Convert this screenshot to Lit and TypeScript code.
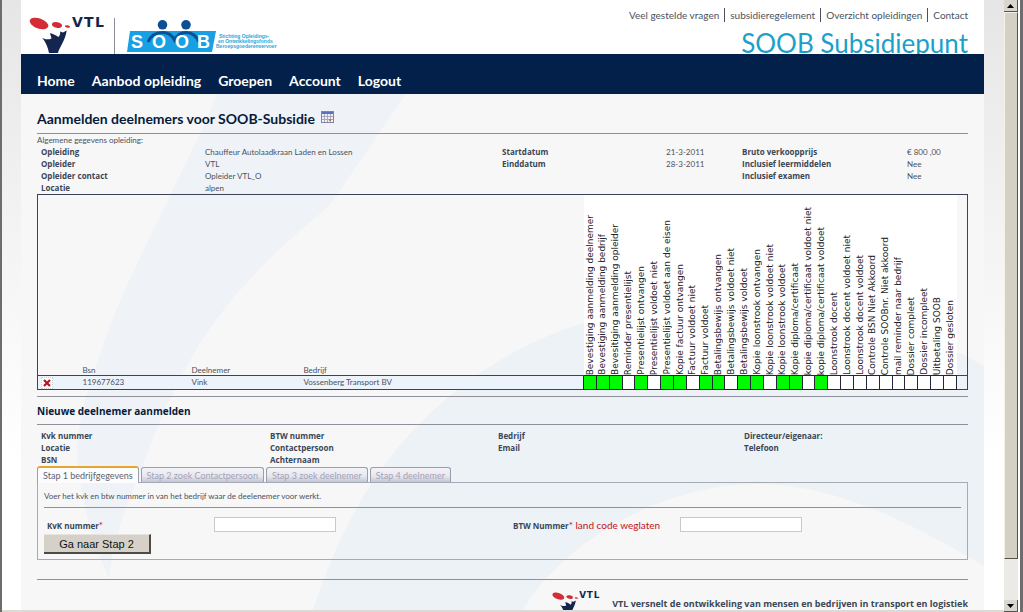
import { LitElement, html, css, svg } from "lit";
import { customElement, property, state } from "lit/decorators.js";
import { classMap } from "lit/directives/class-map.js";

const STEPS: { label: string; done: boolean }[] = [
  { label: "Bevestiging aanmelding deelnemer", done: true },
  { label: "Bevestiging aanmelding bedrijf", done: true },
  { label: "Bevesitiging aanmelding opleider", done: true },
  { label: "Reminder presentielijst", done: false },
  { label: "Presentielijst ontvangen", done: true },
  { label: "Presentielijst voldoet niet", done: false },
  { label: "Presentielijst voldoet aan de eisen", done: true },
  { label: "Kopie factuur ontvangen", done: true },
  { label: "Factuur voldoet niet", done: false },
  { label: "Factuur voldoet", done: true },
  { label: "Betalingsbewijs ontvangen", done: true },
  { label: "Betalingsbewijs voldoet niet", done: false },
  { label: "Betalingsbewijs voldoet", done: true },
  { label: "Kopie loonstrook ontvangen", done: true },
  { label: "Kopie loonstrook voldoet niet", done: false },
  { label: "Kopie loonstrook voldoet", done: true },
  { label: "Kopie diploma/certificaat", done: true },
  { label: "kopie diploma/certificaat voldoet niet", done: false },
  { label: "kopie diploma/certificaat voldoet", done: true },
  { label: "Loonstrook docent", done: false },
  { label: "Loonstrook docent voldoet niet", done: false },
  { label: "Loonstrook docent voldoet", done: false },
  { label: "Controle BSN Niet Akkoord", done: false },
  { label: "Controle SOOBnr. Niet akkoord", done: false },
  { label: "mail reminder naar bedrijf", done: false },
  { label: "Dossier compleet", done: false },
  { label: "Dossier incompleet", done: false },
  { label: "Uitbetaling SOOB", done: false },
  { label: "Dossier gesloten", done: false },
];

@customElement("vtl-logo")
export class VtlLogo extends LitElement {
  static styles = css`
    :host { display: block; }
    svg { display: block; width: 100%; height: auto; overflow: visible; }
    .word { font: 700 14px "DejaVu Sans", sans-serif; fill: #14264f; }
  `;
  render() {
    return html`<svg viewBox="0 0 76 37" role="img" aria-label="VTL">
      <ellipse cx="10" cy="6.5" rx="9.8" ry="5" transform="rotate(20 10 6.5)" fill="#d42b35" />
      <ellipse cx="28" cy="8" rx="5.2" ry="2.8" transform="rotate(12 28 8)" fill="#d42b35" />
      <ellipse cx="38.5" cy="9.5" rx="2.6" ry="1.2" transform="rotate(12 38.5 9.5)" fill="#d42b35" />
      <path d="M12.700 20.300C15 22.500 19 23 22.500 21.500L21 16C24 16.500 27 18.500 29.500 20C31 18.500 31.500 16 31 14.500L34 15.500L37.700 13.500C37 19 35 23 33 27C31 31 29.500 33 29 36H20C19 31 17 25 12.700 20.300Z" fill="#14264f" />
      ${["V", "T", "L"].map((c, i) => svg`<text class="word" x=${[43, 55, 66][i]} y="10">${c}</text>`)}
    </svg>`;
  }
}

@customElement("soob-logo")
export class SoobLogo extends LitElement {
  static styles = css`
    :host { display: block; }
    svg { display: block; width: 100%; height: auto; overflow: visible; }
    .letter { font: 700 18px "Liberation Sans", sans-serif; fill: #fff; }
    .small { font: 700 5px "Liberation Sans", sans-serif; fill: #2aa5dc; }
  `;
  render() {
    return html`<svg viewBox="0 0 150 33" role="img" aria-label="SOOB">
      <path d="M3 11H89L85 32H0Z" fill="#18a0e4" />
      <circle cx="35.500" cy="4.800" r="4.800" fill="#0d4f93" />
      <circle cx="59" cy="4.800" r="4.800" fill="#0d4f93" />
      <path d="M21 22C24 15 29 12.500 35.500 12.500C41 12.500 45 15 47.500 20C50 15 53 12.500 59 12.500C65 12.500 69 15 72 22" fill="none" stroke="#0d4f93" stroke-width="3" />
      ${["S", "O", "O", "B"].map((c, i) => svg`<text class="letter" x=${[4, 25, 48, 70][i]} y="28">${c}</text>`)}
      <text class="small" x="92" y="18">Stichting Opleidings-</text>
      <text class="small" x="91" y="23">en Ontwikkelingsfonds</text>
      <text class="small" x="89" y="28">Beroepsgoederenvervoer</text>
    </svg>`;
  }
}

@customElement("window-scrollbar")
export class WindowScrollbar extends LitElement {
  static styles = css`
    :host { display: flex; flex-direction: column; width: 14px; background: #eceae6; }
    .arrow {
      flex: none; height: 12px; padding: 0; background: #d9d6cd;
      border: 0 solid #55534d; border-width: 0 1px 1px 0;
      display: grid; place-items: center;
    }
    .thumb {
      flex: 1; background: #d4d0c4; border: 1px solid #f4f2ea;
      border-right-color: #55534d; border-bottom-color: #55534d;
    }
    .track { flex: none; height: 41px; }
  `;
  render() {
    return html`
      <button class="arrow" aria-label="Omhoog"><svg width="7" height="4"><path d="M0 4L3.500 0L7 4Z" /></svg></button>
      <div class="thumb"></div>
      <div class="track"></div>
      <button class="arrow" aria-label="Omlaag"><svg width="7" height="4"><path d="M0 0L3.500 4L7 0Z" /></svg></button>
    `;
  }
}

@customElement("status-table")
export class StatusTable extends LitElement {
  @property({ attribute: false }) steps: { label: string; done: boolean }[] = [];
  static styles = css`
    :host { display: block; }
    table {
      width: 100%; table-layout: fixed; border-collapse: collapse;
      border: 1px solid #3c4257; font-size: 8px; color: #4a525e;
    }
    th { padding: 0; font-weight: 400; text-align: left; vertical-align: bottom; }
    td { padding: 0; height: 13px; line-height: 13px; border-top: 1px solid #3c4257; background: #edf3fb; }
    .plain { line-height: 10px; }
    .tool { width: 45px; }
    .bsn { width: 109px; }
    .name { width: 112px; }
    .firm { width: 280px; }
    .end { width: 11px; }
    .step { height: 180px; background: #fff; }
    .turned {
      display: block; writing-mode: vertical-rl; transform: rotate(180deg);
      font: 9px/12px "DejaVu Sans", sans-serif; color: #22242a; white-space: nowrap;
    }
    .flag { background: #fff; border: 1px solid #23263a; }
    .done { background: #00fa00; }
    .remove { display: block; margin-left: 3px; padding: 0; width: 12px; height: 12px; border: 1px dotted #c9cdd4; background: #fff; }
    .remove svg { display: block; margin: 1px; }
  `;
  render() {
    return html`<table>
      <colgroup>
        <col class="tool" /><col class="bsn" /><col class="name" /><col class="firm" />
        ${this.steps.map(() => html`<col />`)}
        <col class="end" />
      </colgroup>
      <thead>
        <tr>
          <th></th>
          <th class="plain">Bsn</th>
          <th class="plain">Deelnemer</th>
          <th class="plain">Bedrijf</th>
          ${this.steps.map((s) => html`<th class="step"><span class="turned">${s.label}</span></th>`)}
          <th></th>
        </tr>
      </thead>
      <tbody>
        <tr>
          <td>
            <button class="remove" aria-label="Verwijderen">
              <svg width="8" height="8" viewBox="0 0 8 8"><path d="M1 1L7 7M7 1L1 7" stroke="#c1121c" stroke-width="2.200" /></svg>
            </button>
          </td>
          <td>119677623</td>
          <td>Vink</td>
          <td>Vossenberg Transport BV</td>
          ${this.steps.map((s) => html`<td class=${classMap({ flag: true, done: s.done })}></td>`)}
          <td></td>
        </tr>
      </tbody>
    </table>`;
  }
}

@customElement("app-root")
export class AppRoot extends LitElement {
  @state() private active = 0;
  private tabs = ["Stap 1 bedrijfgegevens", "Stap 2 zoek Contactpersoon", "Stap 3 zoek deelnemer", "Stap 4 deelnemer"];

  static styles = css`
    * { box-sizing: border-box; }
    :host {
      display: grid; grid-template-columns: minmax(0, 1fr) auto; height: 100vh; overflow: hidden;
      font-family: "Lato", "Open Sans", sans-serif; font-size: 8px; color: #4a525e;
      box-sizing: border-box; border: solid #6d6d6d; border-width: 0 3px 0 2px;
    }
    window-scrollbar { margin-right: 2px; }
    .view {
      min-height: 0; overflow: hidden; padding: 0 20px 0 19px;
      background: linear-gradient(#e6e6e6, #f4f4f4 40%, #fff 75%);
      border-bottom: 2px solid #dcdad5;
    }
    header {
      height: 54px; overflow: hidden; background: #fff; padding: 0 16px 0 8px;
      display: flex; justify-content: space-between;
    }
    .brand { display: flex; align-items: flex-start; }
    .brand vtl-logo { width: 76px; margin-top: 17px; }
    .divider { width: 1px; height: 36px; margin: 18px 12px 0 9px; background: #8a8f99; }
    .brand soob-logo { width: 150px; margin-top: 20px; }
    .corner { display: flex; flex-direction: column; align-items: flex-end; }
    .links { display: flex; margin-top: 8px; }
    .links a {
      font-size: 10px; line-height: 14px; color: #4a525e; text-decoration: none;
      padding: 0 5px; border-right: 1px solid #4a525e;
    }
    .links a:last-child { border: 0; padding-right: 0; }
    .slogan { font-size: 26px; line-height: 32px; color: #1d9fcb; margin-top: 5px; white-space: nowrap; }
    nav { height: 40px; background: #02204a; padding: 17px 16px 0; display: flex; gap: 17px; }
    nav a { font-size: 14px; line-height: 20px; font-weight: 700; color: #fff; text-decoration: none; }
    main { position: relative; background: #f7f7f7; padding: 0 16px; height: 516px; }
    .backdrop { position: absolute; inset: 0; width: 100%; height: 100%; }
    .content { position: relative; }
    h1, h2 { margin: 0; color: #061b3c; font-weight: 700; }
    h1 { display: flex; gap: 6px; padding-top: 15px; height: 40px; font-size: 14px; line-height: 20px; border-bottom: 1px solid #8e9199; }
    h1 svg { margin-top: 2px; }
    h2 { height: 29px; font-family: "Open Sans", sans-serif; font-size: 10px; line-height: 28px; border: 1px solid #8e9199; border-width: 1px 0; margin-top: 6px; }
    .caption { margin: 0; padding-top: 1px; line-height: 11px; }
    .facts, .chosen { display: grid; margin: 0; padding-left: 4px; line-height: 12px; grid-auto-rows: 12px; white-space: nowrap; }
    .facts { grid-template-columns: 164fr 297fr 164fr 76fr 165fr 61fr; }
    .chosen { grid-template-columns: 229fr 228fr 246fr 224fr; padding-top: 5px; }
    .facts > *, .chosen > * { min-width: 0; margin: 0; }
    dt, .chosen, .form label { font-family: "Open Sans", sans-serif; font-weight: 700; color: #3b4656; }
    .tabs { display: flex; gap: 2px; align-items: flex-end; }
    .tab {
      height: 15px; margin: 0; padding: 0 5px; font: 9px/13px "Lato", sans-serif; color: #a3a3b5;
      border: 1px solid #9b9cae; border-bottom: 0; border-radius: 3px 3px 0 0;
      background: linear-gradient(#f4f4f8, #e6e6ef 60%, #c3c4d6);
    }
    .tab.active { height: 17px; margin-bottom: -1px; position: relative; background: #fcfcfc; color: #5b6270; border-top: 2px solid #e6a52e; }
    .panel { height: 78px; border: 1px solid #a5abb2; padding: 0 6px; }
    .hint { margin: 0; height: 25px; line-height: 26px; border-bottom: 1px solid #8e9199; }
    .form { display: grid; grid-template-columns: 170fr 296fr 170fr 281fr; align-items: center; padding-top: 9px; white-space: nowrap; }
    .form label { padding-left: 3px; }
    .form .need { color: #c1121c; font-family: "Lato", sans-serif; font-weight: 400; font-size: 10px; }
    .form input { width: 122px; height: 15px; padding: 0 2px; border: 1px solid #c5cacf; background: #fff; font-size: 9px; }
    .next {
      display: block; width: 107px; height: 20px; margin-top: 2px; padding: 0; background: #d5d1c8; color: #111;
      border: solid #4d4b46; border-width: 0 2px 2px 0; border-top: 1px solid #e8e5de; font: 11px/16px "Liberation Sans", sans-serif;
    }
    footer {
      margin-top: 19px; border-top: 1px solid #8e9199; padding-top: 12px;
      display: flex; justify-content: flex-end; gap: 12px; font-family: "Open Sans", sans-serif;
      font-size: 9px; font-weight: 700; color: #3b4656; line-height: 24px;
    }
    footer vtl-logo { width: 48px; }
  `;

  render() {
    return html`
      <div class="view">
        <header>
          <div class="brand">
            <vtl-logo></vtl-logo>
            <div class="divider"></div>
            <soob-logo></soob-logo>
          </div>
          <div class="corner">
            <div class="links">
              <a href="#">Veel gestelde vragen</a><a href="#">subsidieregelement</a><a href="#">Overzicht opleidingen</a><a href="#">Contact</a>
            </div>
            <div class="slogan">SOOB Subsidiepunt</div>
          </div>
        </header>
        <nav>
          ${["Home", "Aanbod opleiding", "Groepen", "Account", "Logout"].map((t) => html`<a href="#">${t}</a>`)}
        </nav>
        <main>
          <svg class="backdrop" viewBox="0 0 963 516" preserveAspectRatio="none" aria-hidden="true">
            <path d="M196 0C180 40 160 78 142 116C118 165 93 215 79 261C65 300 56 330 56 361C60 410 72 450 88 484C94 440 105 410 119 381C132 340 150 300 172 261C205 205 250 160 307 113C335 75 360 35 385 0Z" fill="#eff3f7" />
            <path d="M292 516C320 430 360 360 424 306C500 240 600 205 730 205C820 208 900 235 963 272V472C900 435 820 390 735 390C640 390 540 450 502 516Z" fill="#ecf2f6" />
          </svg>
          <div class="content">
            <h1>
              Aanmelden deelnemers voor SOOB-Subsidie
              <svg width="13" height="13" viewBox="0 0 13 13">
                <rect x="0.500" y="0.500" width="12" height="11" fill="#eef0fa" stroke="#7d86a8" />
                <rect x="1" y="1" width="11" height="2" fill="#5d72b8" />
                <path d="M1 5.500H12M1 8.500H12M3.500 3V11M6.500 3V11M9.500 3V11" stroke="#a9a7bb" />
                <rect x="8" y="8" width="2" height="2" fill="#d0764f" />
              </svg>
            </h1>
            <p class="caption">Algemene gegevens opleiding:</p>
            <dl class="facts">
              <dt>Opleiding</dt><dd>Chauffeur Autolaadkraan Laden en Lossen</dd>
              <dt>Startdatum</dt><dd>21-3-2011</dd>
              <dt>Bruto verkoopprijs</dt><dd>€ 800 ,00</dd>
              <dt>Opleider</dt><dd>VTL</dd>
              <dt>Einddatum</dt><dd>28-3-2011</dd>
              <dt>Inclusief leermiddelen</dt><dd>Nee</dd>
              <dt>Opleider contact</dt><dd>Opleider VTL_O</dd>
              <dt></dt><dd></dd>
              <dt>Inclusief examen</dt><dd>Nee</dd>
              <dt>Locatie</dt><dd>alpen</dd>
            </dl>
            <status-table .steps=${STEPS}></status-table>
            <h2>Nieuwe deelnemer aanmelden</h2>
            <div class="chosen">
              <span>Kvk nummer</span><span>BTW nummer</span><span>Bedrijf</span><span>Directeur/eigenaar:</span>
              <span>Locatie</span><span>Contactpersoon</span><span>Email</span><span>Telefoon</span>
              <span>BSN</span><span>Achternaam</span>
            </div>
            <div class="tabs" role="tablist">
              ${this.tabs.map(
                (t, i) => html`<button
                  role="tab"
                  aria-selected=${i === this.active}
                  class=${classMap({ tab: true, active: i === this.active })}
                  @click=${() => (this.active = i)}
                >${t}</button>`
              )}
            </div>
            <div class="panel">
              <p class="hint">Voer het kvk en btw nummer in van het bedrijf waar de deelenemer voor werkt.</p>
              <div class="form">
                <label for="kvk">KvK nummer<span class="need">*</span></label>
                <input id="kvk" type="text" />
                <label for="btw">BTW Nummer<span class="need">* land code weglaten</span></label>
                <input id="btw" type="text" />
              </div>
              <button class="next">Ga naar Stap 2</button>
            </div>
            <footer>
              <vtl-logo></vtl-logo>
              <span>VTL versnelt de ontwikkeling van mensen en bedrijven in transport en logistiek</span>
            </footer>
          </div>
        </main>
      </div>
      <window-scrollbar></window-scrollbar>
    `;
  }
}
